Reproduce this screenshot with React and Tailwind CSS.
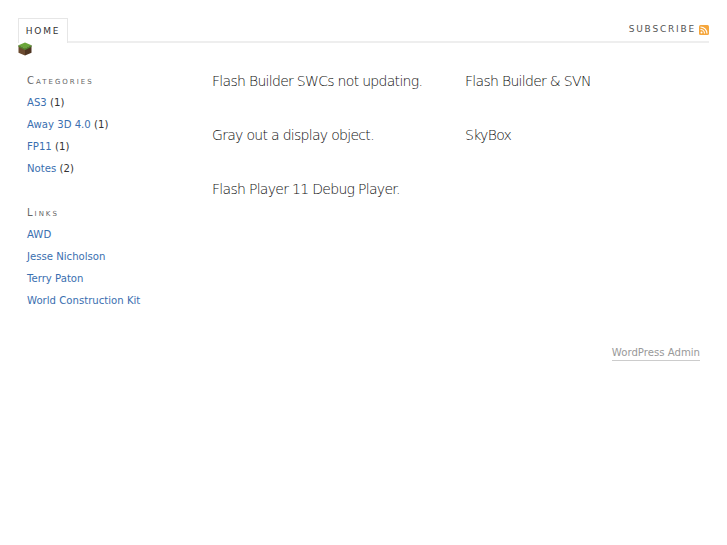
const categories = [
  { name: 'AS3', count: 1 },
  { name: 'Away 3D 4.0', count: 1 },
  { name: 'FP11', count: 1 },
  { name: 'Notes', count: 2 },
];

const links = ['AWD', 'Jesse Nicholson', 'Terry Paton', 'World Construction Kit'];

const posts = [
  'Flash Builder SWCs not updating.',
  'Flash Builder & SVN',
  'Gray out a display object.',
  'SkyBox',
  'Flash Player 11 Debug Player.',
];

const Heading = ({ children }) => (
  <h3 className="text-[10px] leading-[22px] tracking-[2px] text-[#666] [font-variant:small-caps]">{children}</h3>
);

const CubeIcon = () => (
  <svg width="14" height="14" viewBox="0 0 14 14" className="block -mt-px">
    <path d="M7 0.5 L13.5 3.2 L7 6.5 L0.5 3.2 Z" fill="#6aa63a" />
    <path d="M0.5 3.2 L7 6.5 V13.5 L0.5 10.8 Z" fill="#6b4a2f" />
    <path d="M13.5 3.2 L7 6.5 V13.5 L13.5 10.8 Z" fill="#4f3522" />
    <path d="M0.5 3.2 L7 6.5 L13.5 3.2 V4.7 L7 8 L0.5 4.7 Z" fill="#4f8a2c" />
  </svg>
);

const RssIcon = () => (
  <svg width="10" height="10" viewBox="0 0 10 10" className="block">
    <rect width="10" height="10" rx="1.5" fill="#f5a63c" />
    <circle cx="2.5" cy="7.5" r="1" fill="#fff" />
    <path d="M1.5 4.5 A4 4 0 0 1 5.5 8.5" fill="none" stroke="#fff" strokeWidth="1.1" />
    <path d="M1.5 2 A6.5 6.5 0 0 1 8 8.5" fill="none" stroke="#fff" strokeWidth="1.1" />
  </svg>
);

export default function App() {
  return (
    <div className="min-h-[545px] bg-white font-['DejaVu_Sans',sans-serif] text-[#444]">
      <div className="pl-[18px] pr-[18px] pt-[18px]">
        <div className="flex items-end justify-between border-b-2 border-[#eee] h-[25px]">
          <a className="h-[25px] -mb-[2px] w-[50px] bg-white border border-b-0 border-[#e6e6e6] text-center text-[9px] leading-[24px] tracking-[1.75px] text-[#333]">HOME</a>
          <div className="flex items-center gap-[3px] h-[23px]">
            <span className="text-[9px] tracking-[1.8px] text-[#555]">SUBSCRIBE</span>
            <RssIcon />
          </div>
        </div>
        <CubeIcon />
      </div>

      <div className="flex items-start pl-[27px] pt-[14px]">
        <div className="w-[185px] shrink-0 text-[10.15px] leading-[22px] text-[#333]">
          <Heading>Categories</Heading>
          <ul>
            {categories.map((c) => (
              <li key={c.name}>
                <a className="text-[#3a6fb0]">{c.name}</a> ({c.count})
              </li>
            ))}
          </ul>
          <div className="mt-[22px]">
            <Heading>Links</Heading>
            <ul>
              {links.map((l) => (
                <li key={l} className="text-[#3a6fb0]">{l}</li>
              ))}
            </ul>
          </div>
        </div>

        <div className="mt-px grid grid-cols-[253px_1fr] gap-y-[34px] text-[14px] leading-[20px] tracking-[-0.7px] font-extralight text-[#111]">
          {posts.map((p) => (
            <div key={p}>{p}</div>
          ))}
        </div>
      </div>

      <div className="flex justify-end pr-[27px] mt-[34px]">
        <a className="text-[10.15px] leading-[14px] text-[#999] border-b border-[#ccc]">WordPress Admin</a>
      </div>
    </div>
  );
}
